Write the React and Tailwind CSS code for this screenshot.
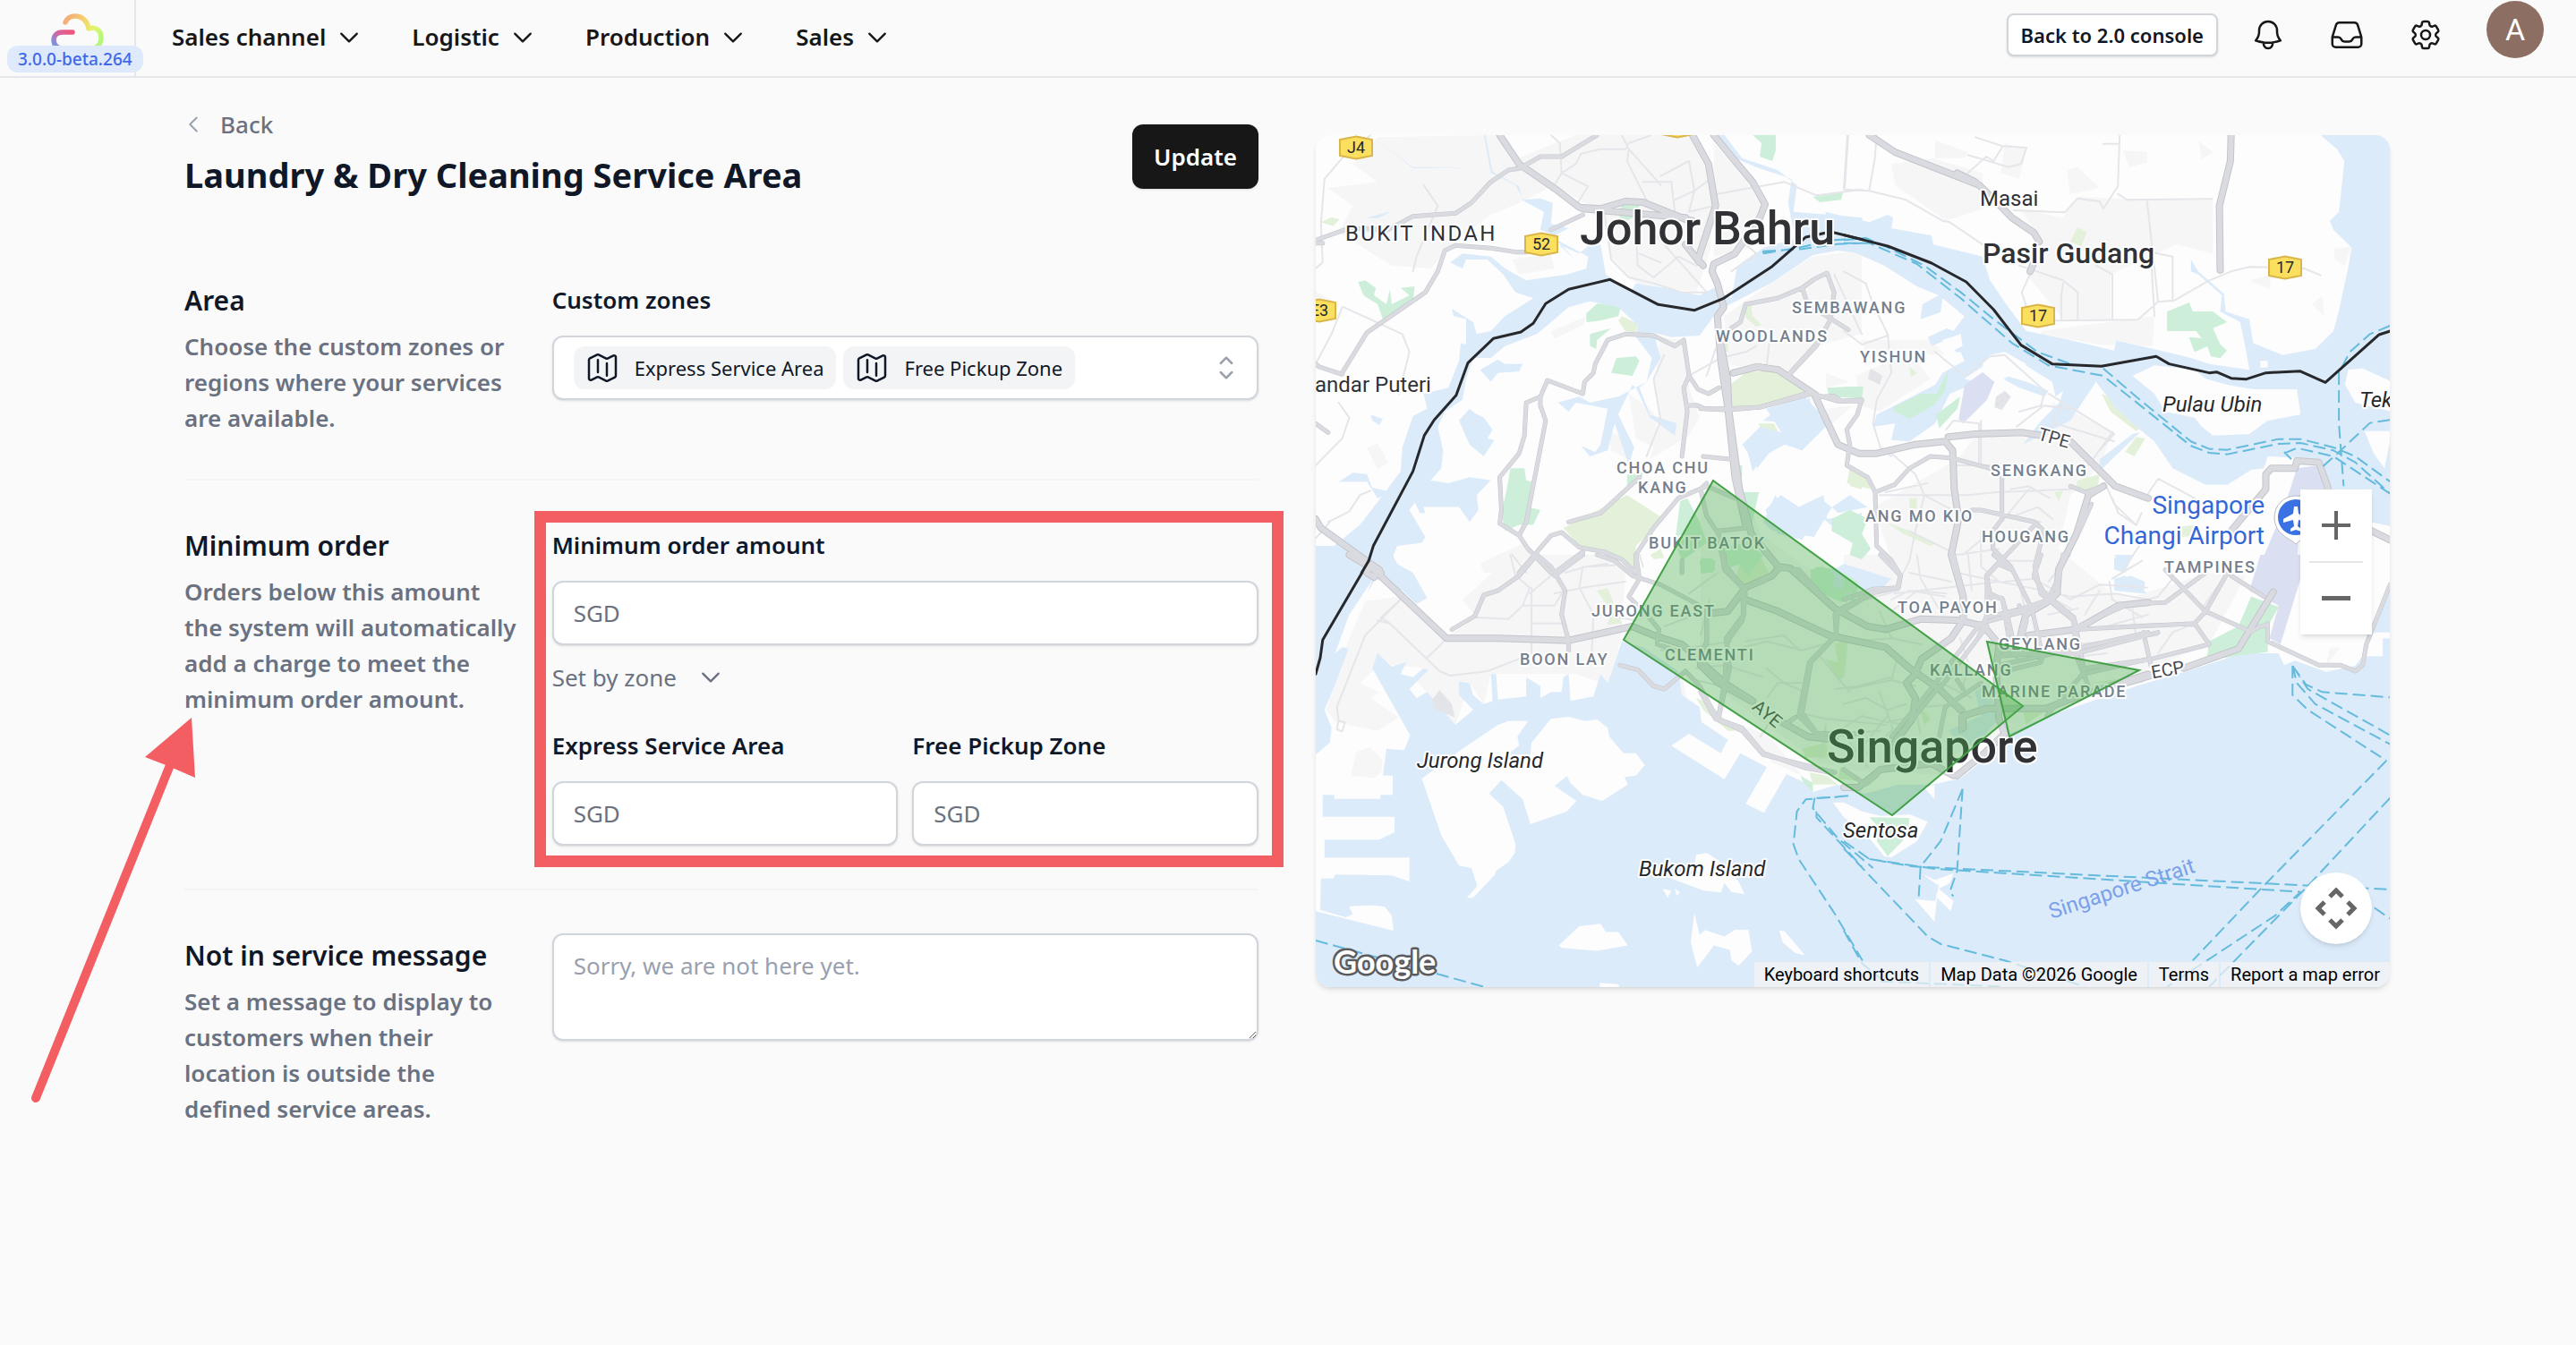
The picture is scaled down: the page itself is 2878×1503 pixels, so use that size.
import React, { useState } from 'react';
import {
  HiOutlineBell,
  HiOutlineInbox,
  HiOutlineCog6Tooth,
  HiOutlineMap,
  HiOutlineChevronDown,
  HiOutlineChevronLeft,
  HiChevronUpDown,
} from 'react-icons/hi2';

const menus = ['Sales channel', 'Logistic', 'Production', 'Sales'];
const zones = ['Express Service Area', 'Free Pickup Zone'];

// The map is cut in sheets, each with its own drawing units
const sheets = {
  nw: 'translate(-10 -11) scale(.3954 .3333)',
  ne: 'translate(590 -11) scale(.4082 .3333)',
  sw: 'translate(-10 469) scale(.3954 .3333)',
  se: 'translate(590 469) scale(.4082 .3333)',
  mid: 'translate(430 229) scale(.3333)',
};

const urban = [
  ['nw', 'M60 210L200 190 130 130 200 40 550 33 580 120 700 60 760 33H1080L1150 200 1140 420 1100 560 930 530 860 440 830 290 700 200 600 260 520 300 410 400 350 480 240 470 90 360 130 270Z'],
  ['nw', 'M1150 60L1210 140 1300 250 1280 400 1150 440ZM1310 530L1430 440 1568 420V700L1440 740 1360 840 1190 800 1180 640ZM1000 710L1060 720 1080 880 1110 980 1080 1040 970 1120 1000 980 980 880ZM690 690L790 640 780 670 700 715ZM910 900L980 960 1000 1090 930 1050ZM490 1470L560 1430 620 1400 700 1500H500ZM850 1030L890 1040 905 1120 860 1090ZM580 450L690 430 700 480 600 500ZM170 1080L200 1065 230 1130 200 1155ZM0 540L90 600 70 660Z'],
  ['ne', 'M130 130L240 110 380 160 380 280 280 320 140 200ZM250 50L340 90 330 110 250 110ZM440 60L500 80 480 180 430 160ZM610 150L640 140 700 210 620 230ZM480 280L600 310 640 240 850 250 1010 250 1010 430 910 400 730 500 730 650 600 650 500 500 540 380ZM540 690L850 640 845 740 700 735 540 700ZM1110 520L1170 500 1165 550ZM970 50L1010 90 980 115ZM1340 415L1390 405 1370 470 1345 450ZM765 85L830 90 830 125 780 140ZM1280 600L1310 570 1315 640Z'],
  ['mid', 'M520 120L700 40 770 130 600 240 540 220ZM540 0L770 0 890 120 820 60 700 30 560 60ZM580 560L860 400 940 300 1130 300 1380 310 1340 420 1240 520 1200 700 1380 850 1500 880V1110L1100 1240 900 1330 800 1450 400 1420 100 1200 0 1100V0V480L160 540 200 650 350 760 560 840 670 830ZM1180 210L1390 310 1340 380 1170 290ZM420 110L500 140 420 160ZM420 230L510 220 430 290Z'],
  ['sw', 'M440 150L580 0H950L900 60 890 250 860 440 760 400 640 400 520 400 500 500 460 430 420 570 300 410 340 380 240 370 180 330 240 330 150 430 205 460 180 480 260 545 200 590 80 560 55 520 75 450 110 310 165 155 260 140 390 280 480 210ZM870 370L980 450 1060 400 1075 490 990 500 870 455ZM125 740L140 660 180 645 215 690 210 730 190 748ZM1190 560L1300 600 1400 740 1320 700ZM1450 850L1568 850V870L1500 860Z'],
  ['se', 'M0 0L600 0 560 100 640 200 1000 60 1100 70 1000 300 800 400 560 520 450 600 300 740 0 720ZM0 840L60 870 80 920 0 870ZM1330 310H1360L1320 370Z'],
];

const water = [
  ['nw', 'M25 1460L150 1340 215 1240 265 1160 270 1080 300 975 340 950 330 900 400 880 430 790 435 730 450 735 450 650 415 640 410 615 470 660 480 700 520 690 560 640 640 580 590 560 555 500 510 450 450 450 440 480 405 460 440 430 520 440 560 480 620 520 735 500 790 480 795 440 700 380 760 450 710 400 770 430 800 400 830 400 845 500 915 560 930 530 1010 545 1110 570 1150 545 1200 580 1215 480 1290 410 1380 380 1360 260 1370 180 1270 140 1210 110 1160 33 1180 33 1230 110 1330 150 1385 200 1375 290 1570 310V430L1500 420 1430 435 1310 530 1180 610 1150 640 1110 705 1030 710 980 695 1000 780 960 860 940 880 970 970 1045 1000 1040 1040 970 980 930 880 920 870 880 970 925 1080 910 1140 870 1000 850 1090 800 1110 775 1075 815 1095 830 1070 850 950 760 930 740 960 710 930 690 935 770 910 800 930 880 910 960 860 975 780 930 710 935 670 880 610 800 590 740 610 700 650 650 700 560 740 520 780 470 780 450 850 440 920 390 960 370 1010 385 1090 380 1150 350 1190 400 1200 460 1180 520 1190 480 1240 485 1290 460 1330 430 1280 330 1280 335 1300 320 1300 305 1265 290 1290 335 1380 325 1400 230 1415 270 1500H25Z'],
  ['nw', 'M430 990L460 950 475 965 500 980 525 1020 510 1050 530 1055 500 1110 460 1070ZM490 820L540 785 560 800 610 800 600 825 540 830 520 860ZM180 970L215 985 205 1005 185 990ZM500 33L505 33 525 155 600 205 610 250 660 245 695 260 690 330 740 345 700 370 660 350 670 290 615 255 590 200 520 160ZM200 50L300 140 410 140 470 155 410 142 300 144ZM1240 1070L1370 1040 1380 1000 1290 990 1330 950 1380 980 1420 910 1430 960 1460 1000 1400 1090 1350 1070 1290 1110 1260 1160ZM90 1195L130 1165 170 1170 185 1215 240 1230 200 1250 170 1195ZM1295 1290L1340 1240 1390 1280 1460 1240 1470 1320 1568 1300V1330L1480 1340 1440 1300 1400 1390 1330 1370ZM170 310L240 288 200 312Z'],
  ['ne', 'M-50 290L70 325 120 300 135 310 130 345 240 370 245 400 380 440 400 520 450 610 500 690 600 715 740 755 745 722 830 745 900 765 950 780 1000 800 1110 820 1100 750 1085 660 1030 625 1035 570 970 500 950 490 950 450 970 490 1040 565 1045 625 1110 650 1120 730 1200 770 1290 750 1340 690 1355 620 1380 480 1390 410 1340 350 1330 320 1355 290 1370 120 1350 80 1305 33H1500V1345L1440 1330 1330 1225 1300 1130 1250 1115 1160 1110 1150 1150 1115 1155 1050 1205 990 1205 900 1150 850 1060 790 1000 740 940 690 860 620 870 580 910 570 860 440 760 400 770 380 800 390 850 290 900 250 1000 180 1060 130 1055 140 1000 80 1010 90 970 250 870 270 830 330 790 300 750 280 720 240 740 230 710 300 670 270 660 280 620 210 650 215 600 260 570 200 540 110 470 0 410H-50Z'],
  ['ne', 'M640 740L690 860 620 990 490 1070 540 990 590 930ZM390 820L500 860 560 890 550 910 480 880ZM700 1160L810 1030 790 1035 700 1120ZM740 1450L790 1440 770 1500 740 1490Z'],
  ['mid', 'M140 350L200 290 270 310 220 230 350 190 430 280 340 370 260 340 190 430ZM210 610L250 520 300 590 400 530 440 560 380 660 240 640ZM440 560L500 520 560 560 460 580ZM400 800L480 750 640 800 600 840 450 830ZM1390 730L1440 740 1420 780 1390 760ZM1390 810L1440 790 1490 810 1485 850 1390 840ZM830 1310L940 1260 920 1180 960 1150 1000 1270 900 1380Z'],
  ['sw', 'M25 -30H255L240 20 300 60 340 145 310 165 270 120 195 80 170 130 185 85 120 200 80 330 100 310 118 315 75 450 50 520 70 580 65 630 25 670Z'],
  ['sw', 'M200 330L240 375 280 360 295 325 265 400 300 410 330 380 345 385 290 450 310 480 340 460 420 570 470 520 430 470 430 425 460 430 470 470 500 500 525 490 520 400 535 400 540 485 620 475 620 410 660 440 660 480 690 460 720 460 725 410 740 400 745 490 810 475 830 400 850 430 860 400 890 290 950 310 1050 390 1060 470 1110 510 1115 560 1190 620 1170 665 1080 600 1030 640 1180 752 1225 665 1300 712 1240 835 1292 865 1355 735 1400 760 1430 795 1500 770 1600 810V1450H25V1195L245 1260 240 1210 220 1180 190 1175 120 1178 130 1205 110 1215 38 1190 40 1085 75 1085 80 1072 240 1075 290 1095V1015H50V955H205L248 930V878H45V805H78V818H208V805H243V740H215L225 650 275 655 292 605 185 380Z'],
  ['se', 'M-30 800L60 800 150 770 240 770 310 752 370 690 400 640 450 600 560 540 800 440 940 390 1090 330 1190 330 1205 370 1235 355 1320 392 1400 372 1420 340 1475 340V280H1500V1450H-30ZM1495 100L1450 260 1495 260ZM740 80L770 70 830 130 740 120ZM740 0H790L760 30Z'],
];

const islands = [
  ['ne', 'M790 840L850 805 960 820 990 850 1050 870 1120 885 1240 885 1250 970 1160 990 1110 1035 1010 1040 980 1010 960 980 880 960 850 900ZM1380 820L1420 815 1500 860V960L1400 930 1372 870ZM1425 1025H1500L1480 1150 1450 1100ZM1140 790H1160V812H1140ZM1260 60L1265 90 1300 110 1325 80 1300 45 1290 100ZM330 850L440 760 500 800 440 850 390 870ZM270 580L330 640 300 690 260 670ZM270 720L320 700 325 740 290 760ZM240 770L320 760 330 790 270 810Z'],
  ['nw', 'M1090 1010L1130 990 1170 1010 1110 1050Z'],
  ['sw', 'M325 750L440 650 540 570 570 557H625L595 610 600 640 565 670 632 670 635 630 690 550 740 543 785 557 820 552 850 580 855 610 895 665 930 665 955 705 930 740 898 745 907 770 835 825 780 805 745 765 735 742 700 775 762 825 735 860 632 903 610 820 550 755 515 800 555 845 590 970 588 1000 570 1030 535 1060 530 1075 470 1150 452 1150 482 1110 465 1050 430 1042 380 940Z'],
  ['sw', 'M1100 1005L1130 1000 1165 1025 1220 1095 1237 1138 1200 1130 1180 1100 1170 1132 1120 1125 1040 1090 980 1060 1090 1070ZM1005 1120L1030 1125 1020 1150ZM1040 1120L1055 1132 1045 1143ZM712 1310L770 1245 830 1237 845 1265 880 1265 907 1310 820 1328 720 1318ZM1095 1200L1110 1275 1125 1258 1180 1280 1210 1257H1248L1258 1330 1220 1378 1200 1360 1195 1325 1150 1310 1125 1350 1103 1383 1085 1300ZM1335 1260L1350 1262 1407 1342 1380 1335 1345 1300ZM828 1435L882 1440V1450H828Z'],
  ['se', 'M-30 830L0 830 50 860 100 875 180 870 230 895 200 960 130 1015 110 1010 70 950 0 880ZM215 1070L250 1090 300 1068 290 1100 260 1120 300 1160 293 1195 255 1150 248 1230 195 1155 250 1160 260 1110ZM220 780L248 770V820Z'],
  ['mid', 'M780 1430L960 1330 1000 1340 960 1400 870 1470Z'],
];

const parks = [
  ['nw', 'M1260 33H1325V85L1315 120 1280 105 1285 60ZM890 262H940L935 300 905 320 880 340ZM145 525L165 520 195 545 190 570 225 600 235 550 240 600 290 570 265 545 305 540 300 590 215 650 200 600 160 570ZM790 630L820 598 890 600 880 640 830 655 790 660ZM800 700L860 680 820 720 818 750 800 740ZM860 830L875 780 930 775 940 790 920 840ZM575 1150H615L620 1190 635 1195 625 1280 660 1290 640 1340 600 1340 560 1360 550 1300 565 1220ZM1430 240L1515 225 1510 250 1450 258ZM905 1170L950 1165 940 1200 905 1210Z'],
  ['nw', 'M1055 1260L1075 1250 1110 1330 1130 1400 1060 1460 1040 1400ZM1215 1140H1230V1180H1215ZM1160 1420L1240 1400 1290 1440 1180 1490Z'],
  ['ne', 'M885 625L945 595 955 625 1010 625 1048 660 1010 680 1030 735 1048 755 1030 780 1005 775 995 740 960 760 945 710 980 715 965 690 885 690Z'],
  ['mid', 'M425 160L545 155 540 195 430 190ZM645 225L740 180 790 180 830 100 820 170 780 220 700 265 650 240ZM790 250L870 190 860 230 800 295ZM440 600L500 570 560 600 540 650 570 700 540 735 500 720 510 680 440 640ZM130 510L195 510 170 620 140 560ZM370 770L410 760 450 790 440 820 500 860 490 880 370 820ZM100 720L160 690 200 720 160 790ZM0 730L50 740 40 780 0 780ZM130 420V450H120Z'],
  ['se', 'M1115 140L1190 175 1160 240 1160 325 1040 345 995 340 1000 290 1080 240ZM70 880L180 882 175 930 160 960 120 1010 90 960 100 920ZM0 60L40 90 30 160 0 140Z'],
  ['sw', 'M1425 80L1440 40 1500 50 1535 100 1510 160 1425 110ZM1110 20L1145 10 1155 50 1115 65ZM1395 740L1430 765 1430 795 1405 770ZM1180 0H1290L1260 50 1225 30Z'],
];

const fields = [
  ['nw', 'M1195 870L1240 830 1320 820 1415 895 1280 945 1195 945ZM725 1350L905 1240 1010 1320 930 1410 925 1485 860 1440 770 1410ZM890 640L935 665 930 695 900 690 880 655ZM1235 605L1255 600 1260 640 1285 670 1270 675 1240 645ZM1175 730H1190V760H1175ZM1275 1000L1320 1000 1335 1035 1290 1030ZM1535 1160L1568 1170V1220L1535 1210ZM40 325L70 308 92 315 75 338ZM970 1440L1000 1420 1010 1450 980 1455Z'],
  ['ne', 'M620 390L640 342 665 358 650 405ZM705 900L760 930 817 1010 800 1025 730 960ZM800 1045L825 1050 795 1110 770 1095ZM925 1345L970 1340 980 1375 925 1380ZM640 1190L700 1170 695 1220 660 1240 636 1215ZM1220 1100L1250 1115 1240 1125Z'],
  ['mid', 'M500 430L550 450 570 500 490 480ZM620 610L700 640 790 680 770 690 680 650ZM700 530H725V565H700ZM700 90L725 110 705 125ZM1185 510L1215 505 1200 540ZM420 1070L460 1080 450 1020 495 1000 480 1130 460 1140ZM730 1220L770 1270 750 1290ZM160 650L240 800 140 820 120 790ZM1080 1240L1160 1240 1090 1290ZM340 1370L420 1350 430 1400 350 1400ZM470 1430L540 1480 460 1470ZM1310 1150L1500 1120 1480 1150Z'],
  ['sw', 'M820 120L850 110 870 170 890 230 850 235 860 190ZM870 0H920L930 40 910 35ZM1100 480L1140 500 1210 590 1190 590 1120 520ZM1420 730L1470 740 1500 770 1430 770Z'],
];

const airfields = [
  ['mid', 'M885 150L945 108 985 140 960 200 880 280 865 265Z'],
  ['ne', 'M1240 1150L1300 1140 1330 1220 1250 1240 1240 1500H1130L1200 1300Z'],
  ['se', 'M1140 0H1270L1195 300 1165 280 1190 170 1110 120Z'],
];

const greyBlocks = [
  ['mid', 'M570 95L610 120 600 150 560 130ZM990 190L1020 170 1040 190 1010 235 985 225Z'],
  ['sw', 'M355 485L375 453 410 500 418 545 360 515Z'],
];

const streets = [
  ['nw', 'M180 33L100 110 50 180 40 330 45 460 25 480M690 33L715 60 720 160 700 200M720 160L795 205 760 270M720 160L760 130 775 95 830 80 900 80 910 60 970 35M890 33L910 80 1000 200M910 80L905 120 960 250M950 190H1030L1040 290M1000 170L1080 120 1095 220 1140 180M1095 220L1080 290 1150 270M1095 220L1040 250M840 290L860 450 910 510 980 530M930 360L935 470 980 510 1050 440 1100 470M980 360L1040 440 1130 560M1000 460L940 430M980 530L1060 560 1130 560M1160 230L1350 190 1440 235 1568 215M1530 33L1520 210M1200 490L1270 430 1240 400M100 610L70 700 25 800M105 610L270 700 290 760 260 900M300 490L310 440 370 270 330 200M90 930L120 980 100 1050 25 1140M60 1330L120 1295 150 1240 180 1225M1080 840L1170 780 1240 760 1270 740M1310 700L1300 800M1010 770L980 850 1000 990 960 1110M25 1385L65 1330M580 1440L620 1500M800 1480L870 1475M1490 500L1568 700'],
  ['ne', 'M10 33L0 210M90 33L85 110 70 215M0 215L70 220 170 250 270 320 290 325 380 400M360 40L435 70 500 75 485 130 450 140 340 100M435 70L410 120 390 105 330 170M465 285L605 292 640 245 700 255 710 280 750 205 755 33M710 62H750M750 230L775 250 1008 247M830 255L845 420 860 590M480 470L600 520 640 560V655M515 485L487 560 500 610M580 655L805 652 860 592 905 587 1000 520 1060 490 1110 475 1200 477 1260 480 1305 503M595 655V570L600 530M735 650V500L690 470M900 590V440L840 425M850 640L840 420M0 490L60 530 80 600 120 700 130 830 90 920 80 1000 100 1080 130 1110M0 690L50 735 120 705M250 760L330 840 400 775 440 770 550 890 540 940 480 960M600 930L550 1050M560 900L740 1035 700 1090M580 1000L740 1060M280 1020L300 990 370 1000 375 1040M370 1000V1130M830 1240L860 1185 960 1250 1000 1300M715 1200L740 1270 800 1340 815 1300M830 1370L760 1500'],
  ['mid', 'M640 380L720 450 750 520 720 640 700 740 670 800M600 520H900L990 510 1240 500M620 510L760 480M700 640L860 720 1000 700M750 520L900 600M650 850L1000 810 1100 830 1240 860 1390 850 1500 870M700 780L840 810M860 780L1000 810M1100 500L1000 620 880 720M1050 590L1130 560 1180 600M940 640V760L1000 810M1000 740L1140 740M1040 500L1100 490 1170 530M1380 800L1480 740M1370 810L1380 870 1480 930M1360 960L1500 920M1330 1020L1500 980M1240 900L1150 850M870 1000L900 1090 880 1160M600 910L640 1000 740 1020M500 1010L640 1000M500 1170L640 1140 660 1060M400 1060L500 1180M330 1040L280 990 150 1010M220 1100L280 1150 350 1180M420 1290L400 1400M480 1300L540 1260 620 1280 690 1290M600 1180L640 1290 660 1400M450 1170L530 1160 640 1130M720 1160L640 1140M330 1250L420 1270 620 1290M540 1400L640 1310M560 1430L500 1350M250 1250L200 1330M20 120L50 30M1380 530L1400 580 1460 620M1060 600L1140 610M840 420L1000 420M940 270V420M30 870L0 990M640 870L700 840 820 860M1060 290L1150 220 1240 230M1380 310L1300 420'],
  ['sw', 'M210 210L265 150 165 270 85 510 90 560M200 220L235 230 375 390 405 405 510 390 620 340M210 210L235 230M340 345L405 270M480 210L570 215 610 170 700 170 720 130M610 170L630 110 590 70 575 0M635 110V330M635 230H730M630 130L690 70M700 130L780 110 900 90M780 40L770 110 810 200 805 330M850 30L790 40 730 60M940 0L950 40M930 220L880 210M1160 60L1080 130M1010 240L1100 200M1000 320L1090 310 1200 290M1100 380L1180 370 1290 410M1200 320L1300 290 1400 320 1460 300M1300 480L1330 430 1400 430M1100 420L1170 440M90 555L108 562 100 592 85 585Z'],
  ['se', 'M0 120L60 150 150 120M130 190L200 120 280 130M200 0L210 80 270 200M340 0L350 120M440 90L520 80 620 150 700 100 830 110M620 0L560 90M480 100L500 200M560 200L640 180M700 120L660 200M720 240L850 230 960 240M740 300L830 270M790 180L800 280M900 80L860 140 740 180M1050 60L980 180M960 230L900 260 860 330M640 240L650 340 720 330M640 300L860 270M480 330L620 300M0 500L60 480 120 520 170 500M120 560L200 540 210 600M60 630L120 540M0 600L100 590M220 510L310 500M250 420L350 480'],
];

const roads = [
  ['nw', 'M25 385L120 345 230 350 300 305 420 295 465 260 520 190 570 150 600 145 660 105 720 105 820 33M690 350L780 300M25 395H45M100 830L170 695 335 560 370 490 390 420 420 403 520 412 590 425 620 425M100 835L35 810 25 800M740 1330L830 1300 940 1180M1120 1110L1200 1120M1060 1500L1060 1460M600 1500L690 1375 720 1365 770 1415 840 1430 890 1455 930 1500M600 1375L545 1335 550 1290 545 1180 600 1100 615 1040 620 930 660 910 680 855 780 900 785 860 810 830 815 800 850 720 900 700 980 705 1040 740 1065 720 1080 840 1065 880 1075 960 1060 1110M660 910L660 940 675 990 620 1330 600 1375 625 1420 690 1500M930 1500V1440L980 1350 1050 1250 1130 1210 1210 1250M1080 840L1105 885 1135 900 1165 880M1075 940L1100 938 1125 950 1190 955 1280 945 1410 900 1440 900M1205 830L1270 805 1320 815 1380 860 1440 910 1465 980 1500 1070 1568 1100M1360 840L1440 740 1480 650 1490 560 1470 495 1435 515 1400 545 1330 580 1240 600 1225 660 1200 680M1400 545L1415 600 1530 685M1450 910L1490 908 1510 925 1568 920M60 1030L25 1000M700 1500L780 1430'],
  ['mid', 'M300 110L400 0M540 200L525 250 490 300 500 350 490 420 560 460 585 510 590 690 640 740 670 790 660 830 570 850 450 920 455 990 370 1080 340 1250 390 1320M585 510L650 485 700 430 770 390 840 395 970 430M0 230H90L200 225 370 180 410 190 460 205H540M910 570H940L1120 610 1150 640 1120 760 1140 850 1250 940 1260 1060 1300 1160M1010 460V600L980 640V700L1040 760 1110 900 1140 1030M1120 620L960 790V870 920L930 1000M960 865H1010L1030 930 1060 1060M1240 490L1290 510 1350 490M1310 550L1270 640M1160 1260L1280 1120 1500 1070M1000 1090L1280 1030 1500 980M1000 1060L1150 1050 1140 1080 1020 1110M940 950L1120 900M60 640L150 630M20 480L0 500 20 590 60 650 80 770 150 840M150 850L140 940 90 1010 80 1150 60 1260M20 930V1010L0 1060M0 1180L50 1270 140 1310 210 1390 450 1450M390 1320L450 1320M470 900L580 850M930 960L780 1160 640 1330M960 960L800 1170M780 1150L880 1240M940 1150L820 1230 800 1330M800 1160L640 1360M860 1140L880 1170M700 1420L620 1360'],
  ['sw', 'M410 250L475 205 500 135 540 120 600 70 650 0M650 0L690 40 730 120 720 200 740 290V320M700 70L780 0M820 0L870 20 920 70 1000 100 1110 170M930 0L940 80 910 140 960 200 995 250 990 300 1040 320M885 370L935 385 980 440 1010 450 1070 390 1110 440 1160 550 1230 580 1290 665 1410 715 1480 730M1180 0V30L1220 90 1240 110M1230 130L1235 200 1185 280 1195 380 1165 540M1130 170V300M1240 110L1290 90 1340 45 1390 50 1490 180 1568 230M1495 270L1500 200 1568 150M1495 270L1420 360 1390 540 1440 600 1568 600M1380 545L1350 570'],
  ['se', 'M0 150L80 115 150 110 155 70 100 0M300 0L330 140 330 220M410 0L460 50 420 30 390 70 400 130 435 150 450 270M540 0L520 70 550 130 630 210 660 400M390 210L490 180 560 150 590 70 600 0M640 240L780 165 880 160 990 60M430 290L640 250 960 230M440 330L640 330 860 260M990 190L960 230 1000 300 840 350 660 380M990 190L1100 250M880 50L990 190 1050 60M1060 70L1150 140M820 260L840 370M320 590V540L400 520M480 170L500 220 490 270M1160 230V290L1300 370 1360 370 1400 390 1420 370 1430 300 1495 100M1160 235L1140 240 1110 260M0 720L60 770 90 740'],
];

const highways = [
  ['nw', 'M545 33L600 130 710 220 770 275 830 280 900 255 950 258 1070 315 1090 320M1090 33L1135 130 1155 270 1105 450 1120 470M1150 33L1210 120 1260 190 1295 265 1280 310 1210 430 1150 465 1145 490 1160 530 1178 610 1160 640 1170 790 1190 950 1210 1180 1240 1340M780 280L1070 310M1070 400L1110 460M25 1320L40 1350 180 1470 210 1500'],
  ['mid', 'M65 0L90 130 95 240 130 500 170 650 260 760 300 765 450 900 560 960 620 970 740 935 870 940 950 960 1000 1020M110 110L190 90 260 100 380 180 460 350 530 380 590 380 720 350 820 340 845 370 850 500 865 600 840 720 880 860 880 940 840 1000 740 1070 720 1120 690 1150 720 1200 710 1270 650 1350M150 870L260 910 430 990 620 1030 700 1100 800 1170 870 1240M0 1090L60 1150 170 1210M270 1280L360 1330 450 1340M40 915L90 910 150 830 240 790 260 765M830 325L920 315 1080 310 1140 320M1240 340L1390 490 1500 530M1350 490L1300 520 1260 650 1200 770 1195 850 1160 880 1090 920 1070 1000M1000 1030L990 1100 1000 1270 1020 1320M880 1300L880 1260 960 1235 1160 1235 1250 1200 1500 1120M1100 990L1260 970 1400 890 1500 880'],
  ['sw', 'M120 0L190 50 395 280 540 280 740 287 920 240 980 270 1060 300 1180 430 1260 490M180 30L205 50 190 75 170 60Z'],
  ['se', 'M770 430L840 405M930 380L1080 315 1175 125M310 740L380 670 440 600M0 780H40L100 720 240 700 300 740'],
  ['ne', 'M70 33L140 90 370 200 420 260 460 310 520 360 535 390M1060 33L1058 120 1028 270 1030 485M310 160L360 190M520 460L510 490M1240 1125L1300 1130 1325 1215M1240 1125L1235 1150 1170 1150 1155 1170V1220L1060 1360M1445 1360L1495 1390'],
];

const ferries = [
  ['nw', 'M1290 430L1390 410 1490 385 1568 380M1290 422L1400 415 1500 398 1568 395M1290 420V430'],
  ['ne', 'M0 385L60 378 120 410 220 470 320 560 410 650 530 760 620 800M0 395H70L200 465 320 580 460 730 560 805 710 840 950 1075 1000 1098 1050 1103 1190 1068 1250 1065 1340 1090 1400 1130 1495 1235M710 815L800 910 950 1060 1000 1085 1050 1088 1190 1052 1250 1052 1340 1080 1400 1110 1495 1195M1495 672L1440 700 1385 760 1355 830V1000L1368 1210M1495 988L1440 998 1360 1090 1310 1145M1205 1100L1240 1082 1340 1110 1495 1235M1205 1095L1225 1120'],
  ['sw', 'M25 1293L500 1448M1530 808L1410 820 1385 860 1375 970 1390 1020 1490 1200 1570 1360M1435 815L1430 850 1500 950 1600 1050M1440 860L1440 880 1568 1045M1440 815L1500 812'],
  ['se', 'M325 785L265 960 210 1045 205 1145M325 785L310 1060 290 1130 300 1145M0 960L70 1020 190 1045 1495 1122M70 1020L250 1053 1250 1130 1180 1210 885 1448M0 985L230 1280 265 1305 440 1360 660 1448M0 1260L50 1370 110 1430M1495 815L1270 1110 1000 1448M1485 690L1145 1115 955 1360M1228 372V470L1270 520 1485 690M1228 372L1240 430 1290 500 1495 635M1230 375L1270 450 1495 605M1228 372L1265 435 1310 460 1495 478M1452 1183L1495 1220M100 1430L440 1448'],
];

const borders = [
  ['nw', 'M155 1500L175 1460 188 1410 300 1160 332 1040 360 988 422 905 455 797 527 715 605 693 640 664 675 598 740 550 857 517 993 601 1096 620 1178 580 1315 473 1410 375 1480 357 1570 383'],
  ['ne', 'M0 368L120 405 240 462 335 525 410 618 485 737 570 800 705 808 855 775 890 800 1000 830 1020 827 1060 848 1102 851 1155 830 1248 824 1318 862 1465 702 1495 690'],
  ['sw', 'M156 60L45 285 38 345 25 400'],
];

function Sheet({ items, ...rest }) {
  return items.map(([sheet, d], i) => (
    <path key={i} d={d} transform={sheets[sheet]} vectorEffect="non-scaling-stroke" {...rest} />
  ));
}

const districts = [
  ['SEMBAWANG', 532, 199],
  ['WOODLANDS', 447, 231],
  ['YISHUN', 608, 254],
  ['CHOA CHU', 336, 378],
  ['KANG', 360, 400],
  ['SENGKANG', 754, 381],
  ['ANG MO KIO', 614, 432],
  ['HOUGANG', 744, 455],
  ['BUKIT BATOK', 372, 462],
  ['TAMPINES', 948, 489],
  ['TOA PAYOH', 650, 534],
  ['JURONG EAST', 308, 538],
  ['GEYLANG', 763, 575],
  ['CLEMENTI', 390, 587],
  ['BOON LAY', 228, 592],
  ['KALLANG', 686, 604],
  ['MARINE PARADE', 744, 628],
];

const islandNames = [
  ['Pulau Ubin', 946, 309],
  ['Tek', 1166, 304],
  ['Jurong Island', 113, 707],
  ['Bukom Island', 361, 828],
  ['Sentosa', 589, 785],
];

const shields = [
  ['J4', 45, 14],
  ['', 404, -10],
  ['52', 252, 122],
  ['E3', 4, 196],
  ['17', 1083, 148],
  ['17', 807, 202],
];

function MapDrawing() {
  return (
    <svg viewBox="0 0 1200 952" className="block w-full bg-[#fdfdfd] font-['Roboto',sans-serif]" role="img" aria-label="Service area map">
      <Sheet items={urban} fill="#f6f6f7" />
      <Sheet items={fields} fill="#e4f1da" />
      <Sheet items={parks} fill="#cdefd9" />
      <Sheet items={water} fill="#dcebfa" />
      <Sheet items={islands} fill="#fdfdfd" />
      <Sheet items={[parks[4], parks[2], parks[3]]} fill="#cdefd9" />
      <Sheet items={airfields} fill="#dbdff2" />
      <Sheet items={greyBlocks} fill="#e3e4e8" />

      <g fill="none" strokeLinejoin="round" strokeLinecap="round">
        <Sheet items={streets} stroke="#e5e6ea" strokeWidth="2" />
        <Sheet items={roads} stroke="#c3c5ca" strokeWidth="5" />
        <Sheet items={highways} stroke="#c3c5ca" strokeWidth="8" />
        <Sheet items={roads} stroke="#dadbe0" strokeWidth="4" />
        <Sheet items={highways} stroke="#dadbe0" strokeWidth="6" />
        <Sheet items={ferries} stroke="#64bbdc" strokeWidth="2" strokeDasharray="14 6" strokeLinecap="butt" />
        <Sheet items={borders} stroke="#26282c" strokeWidth="3" />
      </g>

      <g stroke="#fff" strokeWidth="4" strokeLinejoin="round" className="[paint-order:stroke]">
        <g fill="#75808e" className="text-[18px] font-medium tracking-widest">
          {districts.map(([name, x, y]) => (
            <text key={name} x={x} y={y}>{name}</text>
          ))}
        </g>
        <g fill="#26282c" className="text-2xl italic">
          {islandNames.map(([name, x, y]) => (
            <text key={name} x={x} y={y}>{name}</text>
          ))}
        </g>
        <g fill="#303236">
          <text x="33" y="118" className="text-2xl tracking-widest">BUKIT INDAH</text>
          <text x="742" y="79" className="text-2xl">Masai</text>
          <text x="-1" y="287" className="text-2xl">andar Puteri</text>
          <text x="745" y="143" className="text-[32px] font-medium">Pasir Gudang</text>
          <text x="295" y="122" className="text-[52px] font-medium">Johor Bahru</text>
          <text x="571" y="701" className="text-[52px] font-medium">Singapore</text>
        </g>
        <g fill="#45484d" className="text-xl" textAnchor="middle">
          <text transform="translate(823 345) rotate(16)">TPE</text>
          <text transform="translate(953 604) rotate(-10)">ECP</text>
          <text transform="translate(500 652) rotate(40)">AYE</text>
        </g>
        <g fill="#3367d6" className="text-[28px]" textAnchor="end">
          <text x="1060" y="423">Singapore</text>
          <text x="1060" y="457">Changi Airport</text>
        </g>
      </g>
      <text transform="translate(822 876) rotate(-18)" fill="#7ba0ea" className="text-2xl">Singapore Strait</text>

      {shields.map(([num, x, y], i) => (
        <g key={i} transform={`translate(${x} ${y})`}>
          <path d="M-18 -9L0 -12.500 18 -9V9L0 12.500 -18 9Z" fill="#fbdf5f" stroke="#d9b54a" strokeWidth="2" />
          <text y="6" textAnchor="middle" fill="#26282c" className="text-[18px]">{num}</text>
        </g>
      ))}

      {/* Airport pin */}
      <g transform="translate(1095 427)">
        <path d="M0 30C-5 24-24 20-24 0A24 24 0 0 1 24 0C24 20 5 24 0 30Z" fill="#fff" stroke="#b9bcc2" strokeWidth="1" />
        <circle r="20" fill="#3a72e3" />
        <path d="M-2-12h4l1 8 11 6v4l-11-3-1 7 4 3v3l-6-2-6 2v-3l4-3-1-7-11 3v-4l11-6z" fill="#fff" />
      </g>

      {/* Zones */}
      <g fill="#4caf50" fillOpacity=".38" stroke="#43a047" strokeWidth="2">
        <path d="M444 386L790 638 644 760 344 564Z" />
        <path d="M750 566L920 598 775 672Z" />
      </g>

      <text x="20" y="937" fill="#fff" stroke="#5a5b5e" strokeWidth="5" strokeLinejoin="round" className="font-['Lato',sans-serif] text-4xl font-bold [paint-order:stroke]">
        Google
      </text>
    </svg>
  );
}

function ServiceMap() {
  return (
    <div className="relative mt-8 self-start overflow-hidden rounded-2xl shadow-md">
      <MapDrawing />
      <div className="absolute right-5 bottom-[394px] flex w-20 flex-col items-center bg-white shadow-md">
        <button aria-label="Zoom in" className="flex h-20 w-full items-center justify-center">
          <svg className="size-8" viewBox="0 0 32 32" fill="#666"><path d="M14 0h4v14h14v4H18v14h-4V18H0v-4h14z" /></svg>
        </button>
        <div className="h-0.5 w-15 bg-[#e6e6e6]" />
        <button aria-label="Zoom out" className="flex h-20 w-full items-center justify-center">
          <svg className="size-8" viewBox="0 0 32 32" fill="#666"><path d="M0 13h32v5H0z" /></svg>
        </button>
      </div>
      <button aria-label="Map camera controls" className="absolute right-5 bottom-12 flex size-20 items-center justify-center rounded-full bg-white shadow-md">
        <svg className="size-12" viewBox="-24 -24 48 48" fill="none" stroke="#666" strokeWidth="5">
          <path d="M-7-13L0-20 7-13M-7 13L0 20 7 13M-13-7L-20 0-13 7M13-7L20 0 13 7" />
        </svg>
      </button>
      <div className="absolute right-0 bottom-0 flex gap-0.5 font-['Roboto',sans-serif] text-xl leading-7 text-black">
        <button className="bg-[#f5f5f5]/70 px-[11px]">Keyboard shortcuts</button>
        <span className="bg-[#f5f5f5]/70 px-[11px]">Map Data ©2026 Google</span>
        <a href="#terms" className="bg-[#f5f5f5]/70 px-[11px]">Terms</a>
        <a href="#report" className="bg-[#f5f5f5]/70 px-[11px]">Report a map error</a>
      </div>
    </div>
  );
}

function Header() {
  return (
    <header className="relative flex h-[87px] border-b-2 border-gray-200">
      <div className="w-38 shrink-0 border-r-2 border-gray-200">
        <svg className="mt-3 ml-13 h-12 w-17" viewBox="0 0 68 48" fill="none" strokeWidth="5.500" strokeLinecap="round" strokeLinejoin="round">
          <defs>
            <linearGradient id="cloudTop" x1="20" y1="0" x2="62" y2="30" gradientUnits="userSpaceOnUse">
              <stop stopColor="#f2a07e" />
              <stop offset=".5" stopColor="#f6d66a" />
              <stop offset=".75" stopColor="#e3f56e" />
              <stop offset="1" stopColor="#b4f77a" />
            </linearGradient>
            <linearGradient id="cloudLeft" x1="28" y1="24" x2="8" y2="40" gradientUnits="userSpaceOnUse">
              <stop stopColor="#f0557f" />
              <stop offset=".5" stopColor="#d465a0" />
              <stop offset="1" stopColor="#6f9bea" />
            </linearGradient>
          </defs>
          <path d="M21 13C23 8 27 6 32 6C41 6 46 13 47 20C56 17 61 23 61 30C61 38 56 42 50 42" stroke="url(#cloudTop)" />
          <path d="M29 24H18C11 24 8 28 8 33C8 38 12 42 17 42" stroke="url(#cloudLeft)" />
        </svg>
      </div>
      <span className="absolute top-[51px] left-2 rounded-xl bg-[#dee9fb] px-3 text-[19px] leading-[30px] font-medium text-[#3f68ea]">
        3.0.0-beta.264
      </span>

      <nav className="flex items-center gap-14 pl-10">
        {menus.map(menu => (
          <button key={menu} className="flex items-center gap-3 pb-0.5 text-[26px] font-semibold">
            {menu}
            <HiOutlineChevronDown className="size-7 stroke-2" />
          </button>
        ))}
      </nav>

      <div className="ml-auto flex items-center gap-12 pr-9 pb-2">
        <button className="rounded-lg border-2 border-gray-300 bg-white px-3.5 text-[22px] leading-11 font-semibold text-gray-900 shadow-sm">
          Back to 2.0 console
        </button>
        <div className="-ml-3 flex gap-12">
          <button aria-label="Notifications"><HiOutlineBell className="size-10" /></button>
          <button aria-label="Inbox"><HiOutlineInbox className="size-10" /></button>
          <button aria-label="Settings"><HiOutlineCog6Tooth className="size-10" /></button>
        </div>
        <button aria-label="Account" className="mt-px size-16 self-start rounded-full bg-[#8d6e63] font-['Roboto',sans-serif] text-[34px] leading-none text-white">
          A
        </button>
      </div>
    </header>
  );
}

function Section({ title, text, htmlFor, children }) {
  return (
    <section className="grid grid-cols-3 gap-8 border-b-2 border-gray-100 py-12 first:pt-0 last:border-0">
      <div>
        <h2 className="text-[30px] leading-[50px] font-semibold text-gray-900">
          {htmlFor ? <label htmlFor={htmlFor}>{title}</label> : title}
        </h2>
        <p className="mt-1.5 pr-2 text-[26px] leading-10 font-semibold text-gray-500">{text}</p>
      </div>
      <div className="relative col-span-2">{children}</div>
    </section>
  );
}

function MoneyField({ id, label }) {
  const [value, setValue] = useState('');

  return (
    <div className="min-w-0 flex-1">
      <label htmlFor={id} className="block text-[26px] leading-12 font-semibold text-gray-900">{label}</label>
      <input
        id={id}
        value={value}
        onChange={e => setValue(e.target.value)}
        placeholder="SGD"
        className="mt-4 block h-18 w-full rounded-xl border-2 border-gray-300 bg-white px-[22px] text-[26px] shadow-sm placeholder:text-gray-500"
      />
    </div>
  );
}

export default function App() {
  const [showZones, setShowZones] = useState(true);

  return (
    <div className="min-h-screen bg-[#fafafa] font-['Noto_Sans','Segoe_UI',sans-serif] text-[#171717]">
      <Header />

      <main className="relative pr-0.5">
        <div className="mx-auto grid max-w-[2560px] grid-cols-2 gap-16 px-12 pt-8">
          <div>
            <div className="mb-10 flex items-start justify-between">
              <div>
                <a href="#back" className="flex items-center gap-5 text-[26px] leading-10 font-medium text-gray-500">
                  <HiOutlineChevronLeft className="-mx-0.5 size-6 stroke-2 text-gray-400" />
                  Back
                </a>
                <h1 className="mt-2 text-[38px] leading-14 font-bold text-gray-900">
                  Laundry &amp; Dry Cleaning Service Area
                </h1>
              </div>
              <button className="mt-5 h-18 rounded-xl bg-[#171717] px-6 text-[26px] font-semibold text-white shadow-sm">Update</button>
            </div>

            <Section title="Area" text="Choose the custom zones or regions where your services are available.">
              <label htmlFor="zones" className="block text-[26px] leading-12 font-semibold text-gray-900">Custom zones</label>
              <button id="zones" className="mt-4 flex h-18 w-full items-center gap-2 rounded-xl border-2 border-gray-300 bg-white pr-3.5 pl-[22px] text-[22px] text-gray-900 shadow-sm">
                {zones.map(zone => (
                  <span key={zone} className="flex h-12 items-center gap-4 rounded-xl bg-gray-100 pr-3.5 pl-3">
                    <HiOutlineMap className="size-10" />
                    {zone}
                  </span>
                ))}
                <HiChevronUpDown className="ml-auto size-10 text-gray-400" />
              </button>
            </Section>

            <Section title="Minimum order" text="Orders below this amount the system will automatically add a charge to meet the minimum order amount.">
              <MoneyField id="min-order" label="Minimum order amount" />
              <button
                onClick={() => setShowZones(!showZones)}
                className="mt-4 flex items-center gap-6 text-[26px] leading-10 text-gray-500"
              >
                Set by zone
                <HiOutlineChevronDown className="size-7 stroke-2" />
              </button>
              {showZones && (
                <div className="mt-8 flex gap-4">
                  {zones.map((zone, i) => (
                    <MoneyField key={zone} id={`zone-${i}`} label={zone} />
                  ))}
                </div>
              )}
              <div className="pointer-events-none absolute -top-3.5 -right-7 -bottom-6 -left-5 border-[13px] border-[#f35e63]" />
            </Section>

            <Section
              title="Not in service message"
              htmlFor="message"
              text="Set a message to display to customers when their location is outside the defined service areas."
            >
              <textarea
                id="message"
                placeholder="Sorry, we are not here yet."
                className="block h-30 w-full rounded-xl border-2 border-gray-300 bg-white px-[22px] py-3.5 text-[26px] leading-10 shadow-sm placeholder:text-gray-400"
              />
            </Section>
          </div>

          <ServiceMap />
        </div>

        {/* Arrow to the minimum order text */}
        <svg className="pointer-events-none absolute top-[713px] left-8 h-[436px] w-48" viewBox="32 800 192 436">
          <path d="M40 1227L192 850" stroke="#f35e63" strokeWidth="10" strokeLinecap="round" />
          <path d="M214 802L162 846 188 856 218 869Z" fill="#f35e63" />
        </svg>
      </main>
    </div>
  );
}
